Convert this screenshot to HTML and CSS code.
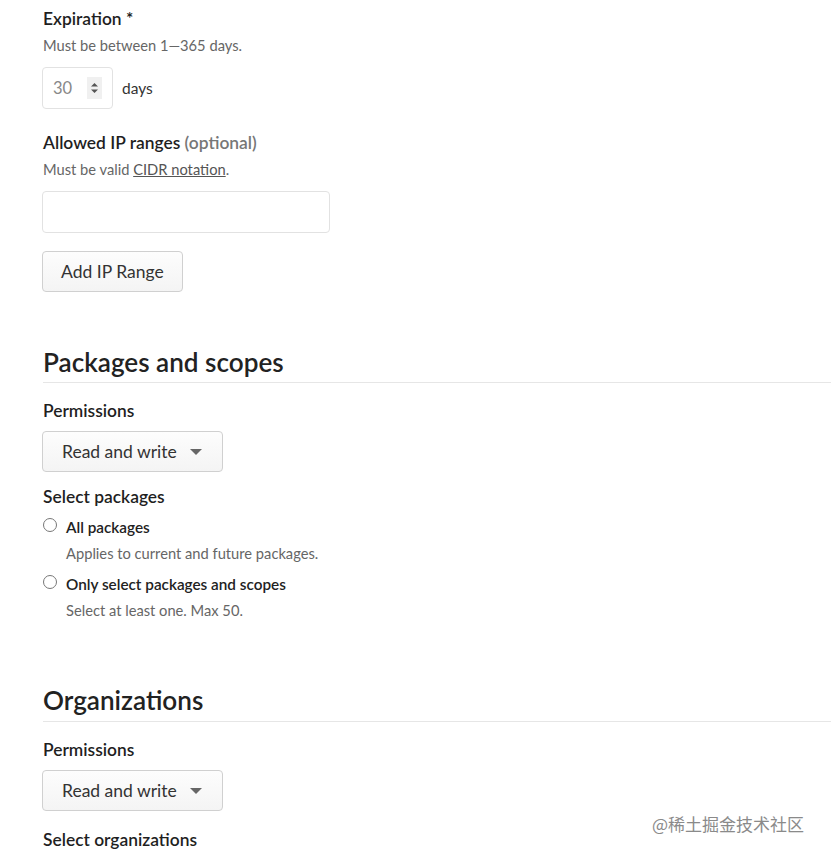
FILE: index.html
```html
<!DOCTYPE html>
<html>
<head>
<meta charset="utf-8">
<link rel="stylesheet" href="styles.css">
</head>
<body>
<main class="page">
  <section class="field">
    <div class="label">Expiration *</div>
    <div class="hint">Must be between 1—365 days.</div>
    <div class="days-row">
      <div class="number-input">
        <span class="num">30</span>
        <span class="spinner">
          <svg width="9" height="14" viewBox="0 0 9 14"><path d="M1 5.5 L4.5 2 L8 5.5 Z M1 8.5 L4.5 12 L8 8.5 Z" fill="#555"/></svg>
        </span>
      </div>
      <span class="days">days</span>
    </div>
  </section>

  <section class="field ip">
    <div class="label">Allowed IP ranges <span class="optional">(optional)</span></div>
    <div class="hint">Must be valid <a class="link" href="#">CIDR notation</a>.</div>
    <div class="text-input"></div>
    <button class="btn">Add IP Range</button>
  </section>

  <section class="group packages">
    <h2 class="heading">Packages and scopes</h2>
    <div class="label">Permissions</div>
    <button class="btn select">Read and write <span class="caret"></span></button>
    <div class="label sub">Select packages</div>
    <div class="radio-row">
      <span class="radio"></span>
      <div>
        <div class="radio-label">All packages</div>
        <div class="hint">Applies to current and future packages.</div>
      </div>
    </div>
    <div class="radio-row">
      <span class="radio"></span>
      <div>
        <div class="radio-label">Only select packages and scopes</div>
        <div class="hint">Select at least one. Max 50.</div>
      </div>
    </div>
  </section>

  <section class="group orgs">
    <h2 class="heading">Organizations</h2>
    <div class="label">Permissions</div>
    <button class="btn select">Read and write <span class="caret"></span></button>
    <div class="label sub">Select organizations</div>
  </section>
</main>
<div class="watermark">@稀土掘金技术社区</div>
</body>
</html>
```

FILE: styles.css
```css
html, body {
  margin: 0;
  padding: 0;
  background: #fff;
  overflow: hidden;
}
body {
  font-family: Lato, "Noto Sans", "Noto Sans CJK SC", sans-serif;
  color: #222;
  width: 831px;
  height: 857px;
  position: relative;
}
.page {
  padding: 7px 0 0 43px;
}
.label {
  font-size: 17.4px;
  font-weight: 600;
  color: #1f1f1f;
  line-height: 24px;
}
.optional {
  color: #777;
}
.hint {
  font-size: 14.7px;
  color: #666;
  line-height: 20px;
  margin-top: 4px;
}
.link {
  color: #555;
  text-decoration: underline;
}
.days-row {
  display: flex;
  align-items: center;
  margin-top: 12px;
}
.number-input {
  box-sizing: border-box;
  width: 71px;
  height: 42px;
  border: 1px solid #e2e2e2;
  border-radius: 4px;
  display: flex;
  align-items: center;
  padding-left: 10px;
  margin-left: -1px;
}
.num {
  font-size: 16.5px;
  color: #888;
  width: 34px;
}
.spinner {
  width: 15px;
  height: 22px;
  background: #f0f0f0;
  display: flex;
  align-items: center;
  justify-content: center;
}
.days {
  font-size: 15.5px;
  color: #333;
  margin-left: 9px;
}
.field.ip {
  margin-top: 22px;
}
.text-input {
  box-sizing: border-box;
  width: 288px;
  height: 42px;
  border: 1px solid #e2e2e2;
  border-radius: 4px;
  margin-top: 12px;
  margin-left: -1px;
}
.btn {
  box-sizing: border-box;
  display: flex;
  align-items: center;
  height: 41px;
  margin-left: -1px;
  padding: 0 18px;
  border: 1px solid #d0d0d0;
  border-radius: 4px;
  background: linear-gradient(#fdfdfd, #f4f4f4);
  font-family: inherit;
  font-size: 17.5px;
  color: #333;
}
.ip .btn {
  margin-top: 18px;
  width: 141px;
}
.group {
  margin-top: 53px;
}
.heading {
  margin: 0 0 16px 0;
  font-size: 26.1px;
  font-weight: 600;
  color: #222;
  line-height: 34px;
  padding-bottom: 3px;
  border-bottom: 1px solid #e6e6e6;
}
.select {
  width: 181px;
  margin-top: 8px;
  padding-left: 19px;
}
.caret {
  display: inline-block;
  margin-left: 13px;
  width: 0;
  height: 0;
  border-left: 6px solid transparent;
  border-right: 6px solid transparent;
  border-top: 6px solid #666;
}
.label.sub {
  margin-top: 13px;
}
.orgs .label.sub {
  margin-top: 17px;
}
.radio-row {
  display: flex;
  margin-top: 8px;
}
.radio-row + .radio-row {
  margin-top: 11px;
}
.radio {
  box-sizing: border-box;
  width: 14px;
  height: 14px;
  border: 1px solid #777;
  border-radius: 50%;
  margin-top: 1px;
  margin-right: 9px;
  flex: none;
}
.radio-label {
  font-size: 15.3px;
  font-weight: 600;
  color: #222;
  line-height: 20px;
}
.radio-row .hint {
  margin-top: 6px;
}
.orgs {
  margin-top: 63px;
}
.orgs .heading {
  padding-bottom: 4px;
}
.watermark {
  position: absolute;
  left: 652px;
  top: 811px;
  font-size: 17px;
  color: #8a8a8a;
  font-family: "Noto Sans CJK SC", sans-serif;
}
```
